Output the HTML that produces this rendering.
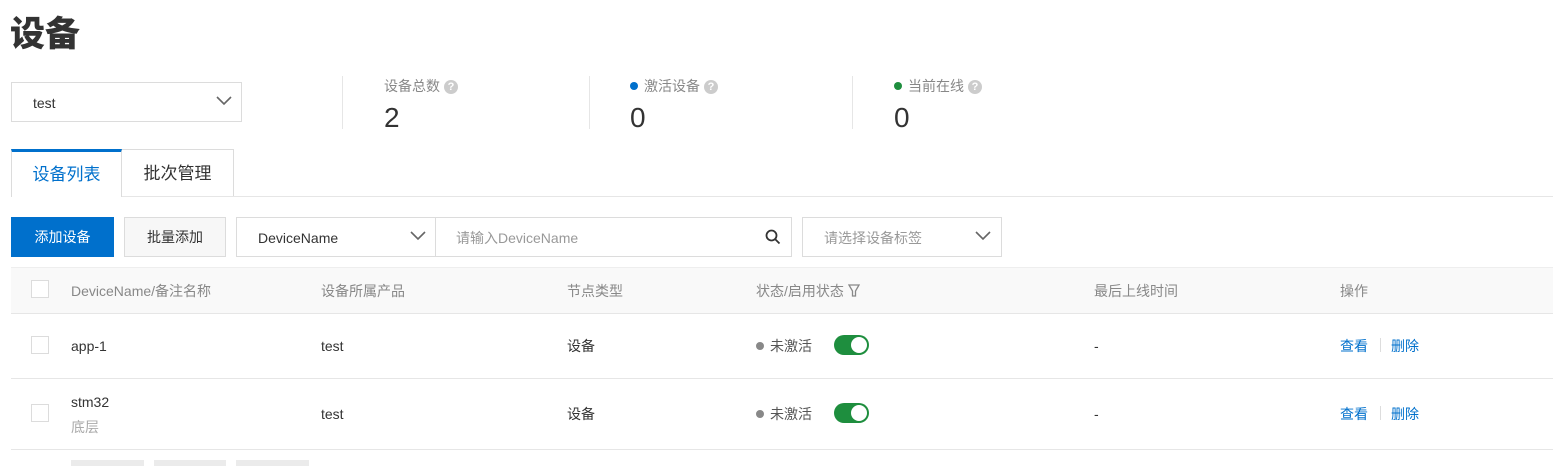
<!DOCTYPE html><html><head><meta charset="utf-8"><style>
*{box-sizing:border-box;margin:0;padding:0}
body{width:1553px;height:466px;overflow:hidden;background:#fff;font-family:"Liberation Sans","Noto Sans CJK SC",sans-serif;color:#333;position:relative;font-size:14px}
.a{position:absolute;white-space:nowrap;line-height:20px}
.g{color:#888}
.q{display:inline-block;width:14px;height:14px;border-radius:50%;background:#ccc;color:#fff;font-size:11px;line-height:14px;text-align:center;font-weight:bold;vertical-align:1px;margin-left:4px}
.box{position:absolute;border:1px solid #dcdcdc;background:#fff}
.cb{position:absolute;width:18px;height:18px;border:1px solid #dcdcdc;background:#fff}
.line{position:absolute;left:11px;right:0;height:1px;background:#e6e6e6}
.tg{position:absolute;width:35px;height:20px;border-radius:10px;background:#1e8e3e}
.tg:after{content:"";position:absolute;right:2px;top:2px;width:16px;height:16px;border-radius:50%;background:#fff}
.dot{display:inline-block;width:8px;height:8px;border-radius:50%;margin-right:6px;vertical-align:1px}
.lk{color:#0070cc}
</style></head><body>
<div class="a" style="left:10px;top:12px;font-size:35px;font-weight:900;color:#333;line-height:46px">设备</div>
<div class="box" style="left:11px;top:82px;width:231px;height:40px"></div>
<div class="a" style="left:33px;top:93px">test</div>
<svg class="a" style="left:216px;top:96px" width="16" height="10"><path d="M1 1 L8 8 L15 1" fill="none" stroke="#666" stroke-width="1.6"/></svg>
<div class="a" style="left:342px;top:76px;width:1px;height:53px;background:#e6e6e6"></div>
<div class="a" style="left:589px;top:76px;width:1px;height:53px;background:#e6e6e6"></div>
<div class="a" style="left:852px;top:76px;width:1px;height:53px;background:#e6e6e6"></div>
<div class="a g" style="left:384px;top:76px">设备总数<span class="q">?</span></div>
<div class="a" style="left:384px;top:104px;font-size:28px;line-height:28px">2</div>
<div class="a g" style="left:630px;top:76px"><span class="dot" style="background:#0070cc"></span>激活设备<span class="q">?</span></div>
<div class="a" style="left:630px;top:104px;font-size:28px;line-height:28px">0</div>
<div class="a g" style="left:894px;top:76px"><span class="dot" style="background:#1e8e3e"></span>当前在线<span class="q">?</span></div>
<div class="a" style="left:894px;top:104px;font-size:28px;line-height:28px">0</div>
<div class="line" style="top:196px"></div>
<div class="a" style="left:11px;top:149px;width:111px;height:48px;border:1px solid #dcdcdc;border-top:3px solid #0070cc;border-bottom:none;background:#fff;color:#0070cc;font-size:17px;text-align:center;line-height:46px">设备列表</div>
<div class="a" style="left:122px;top:149px;width:112px;height:47px;border:1px solid #dcdcdc;border-left:none;border-bottom:none;font-size:17px;text-align:center;line-height:48px">批次管理</div>
<div class="a" style="left:11px;top:217px;width:103px;height:40px;background:#0070cc;color:#fff;text-align:center;line-height:40px">添加设备</div>
<div class="a" style="left:124px;top:217px;width:102px;height:40px;background:#f7f7f7;border:1px solid #dcdcdc;text-align:center;line-height:38px">批量添加</div>
<div class="box" style="left:236px;top:217px;width:556px;height:40px"></div>
<div class="a" style="left:435px;top:217px;width:1px;height:40px;background:#dcdcdc"></div>
<div class="a" style="left:258px;top:228px">DeviceName</div>
<svg class="a" style="left:410px;top:231px" width="16" height="10"><path d="M1 1 L8 8 L15 1" fill="none" stroke="#666" stroke-width="1.6"/></svg>
<div class="a" style="left:456px;top:228px;color:#999">请输入DeviceName</div>
<svg class="a" style="left:765px;top:229px" width="16" height="16"><circle cx="6.5" cy="6.5" r="5" fill="none" stroke="#333" stroke-width="1.8"/><path d="M10 10 L14.5 14.5" stroke="#333" stroke-width="1.8"/></svg>
<div class="box" style="left:802px;top:217px;width:200px;height:40px"></div>
<div class="a" style="left:824px;top:228px;color:#999">请选择设备标签</div>
<svg class="a" style="left:975px;top:231px" width="16" height="10"><path d="M1 1 L8 8 L15 1" fill="none" stroke="#666" stroke-width="1.6"/></svg>
<div class="a" style="left:11px;top:267px;right:0;height:46px;background:#f9f9f9;border-top:1px solid #eee"></div>
<div class="line" style="top:313px"></div>
<div class="line" style="top:378px"></div>
<div class="line" style="top:449px"></div>
<div class="cb" style="left:31px;top:280px"></div>
<div class="a g" style="left:71px;top:281px">DeviceName/备注名称</div>
<div class="a g" style="left:321px;top:281px">设备所属产品</div>
<div class="a g" style="left:567px;top:281px">节点类型</div>
<div class="a g" style="left:756px;top:281px">状态/启用状态 <svg width="12" height="14" style="vertical-align:-2px"><path d="M1 1 H11 L7.5 7 V12 H4.5 V7 Z" fill="none" stroke="#888" stroke-width="1.3"/></svg></div>
<div class="a g" style="left:1094px;top:281px">最后上线时间</div>
<div class="a g" style="left:1340px;top:281px">操作</div>
<div class="cb" style="left:31px;top:336px"></div>
<div class="a" style="left:71px;top:336px">app-1</div>
<div class="a" style="left:321px;top:336px">test</div>
<div class="a" style="left:567px;top:336px">设备</div>
<div class="a" style="left:756px;top:336px;color:#555"><span class="dot" style="background:#888"></span>未激活</div>
<div class="tg" style="left:834px;top:335px"></div>
<div class="a" style="left:1094px;top:336px">-</div>
<div class="a lk" style="left:1340px;top:336px">查看</div>
<div class="a" style="left:1380px;top:338px;width:1px;height:14px;background:#ddd"></div>
<div class="a lk" style="left:1391px;top:336px">删除</div>
<div class="cb" style="left:31px;top:404px"></div>
<div class="a" style="left:71px;top:392px">stm32</div>
<div class="a" style="left:71px;top:417px;color:#aaa">底层</div>
<div class="a" style="left:321px;top:404px">test</div>
<div class="a" style="left:567px;top:404px">设备</div>
<div class="a" style="left:756px;top:404px;color:#555"><span class="dot" style="background:#888"></span>未激活</div>
<div class="tg" style="left:834px;top:403px"></div>
<div class="a" style="left:1094px;top:404px">-</div>
<div class="a lk" style="left:1340px;top:404px">查看</div>
<div class="a" style="left:1380px;top:406px;width:1px;height:14px;background:#ddd"></div>
<div class="a lk" style="left:1391px;top:404px">删除</div>
<div class="a" style="left:71px;top:460px;width:73px;height:6px;background:#ebebeb"></div>
<div class="a" style="left:154px;top:460px;width:72px;height:6px;background:#ebebeb"></div>
<div class="a" style="left:236px;top:460px;width:73px;height:6px;background:#ebebeb"></div>
</body></html>
